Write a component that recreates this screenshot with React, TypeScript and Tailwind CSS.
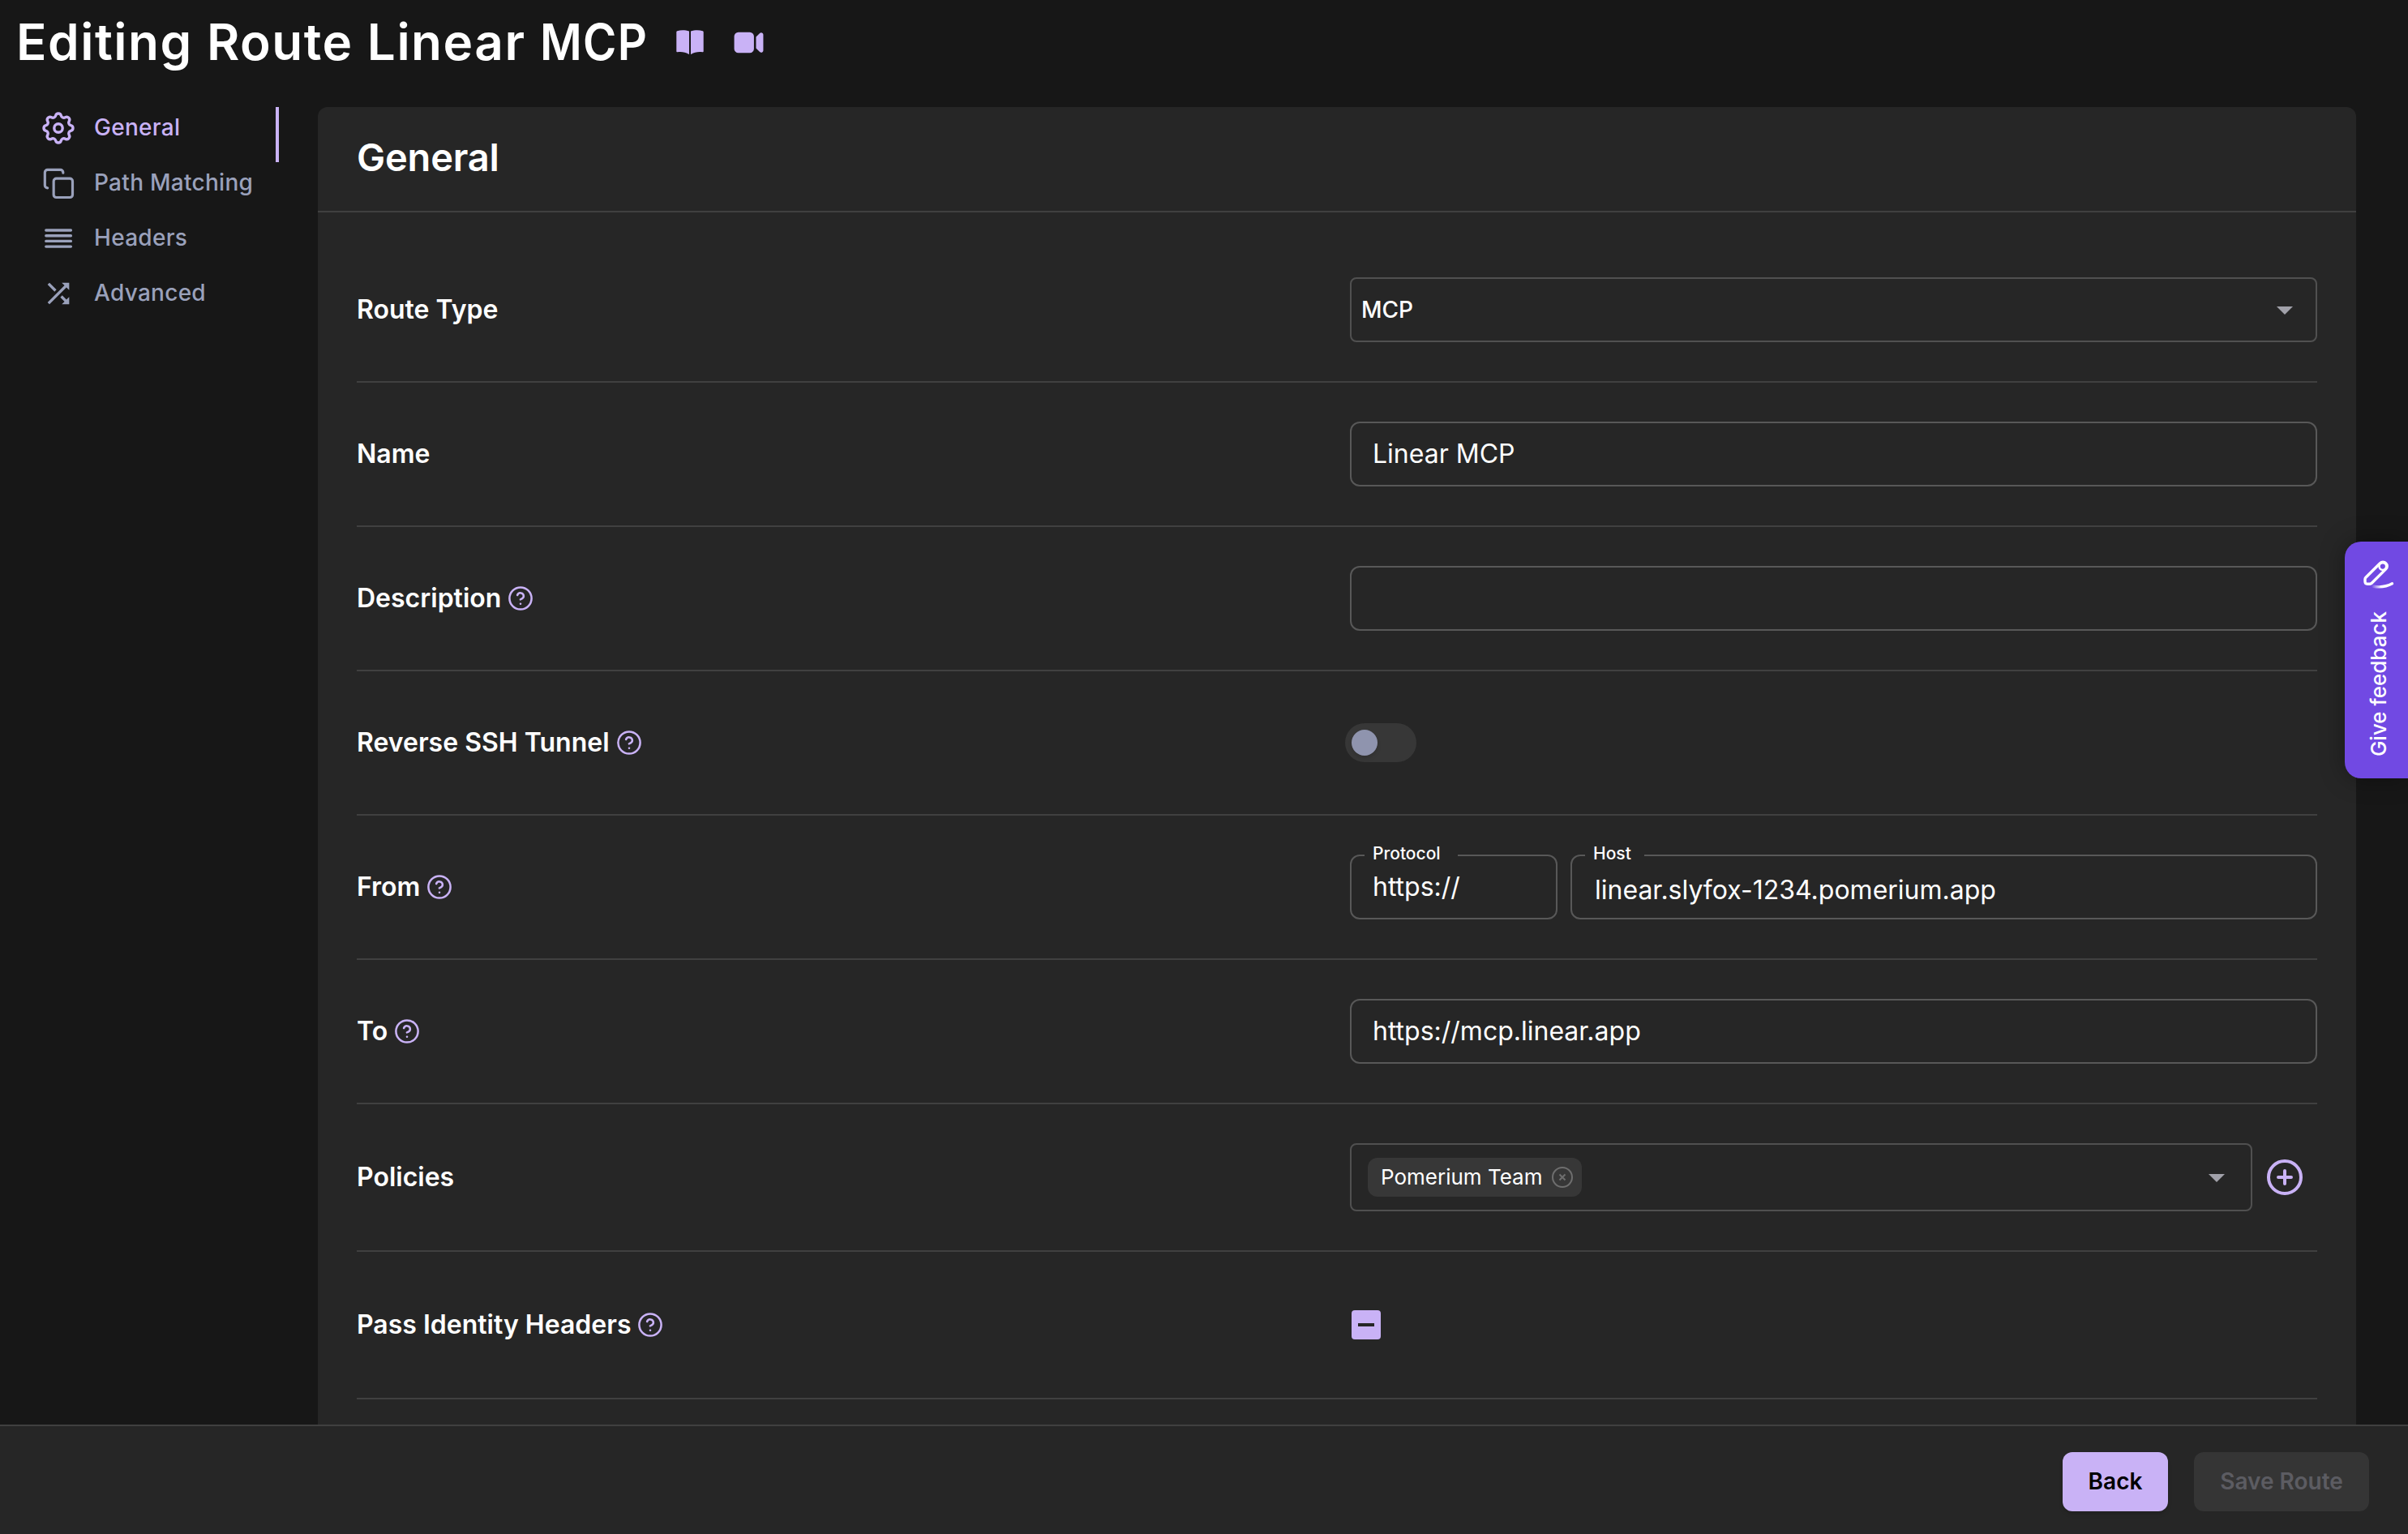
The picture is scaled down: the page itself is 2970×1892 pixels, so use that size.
import type { ReactNode } from 'react'

const NAV_ITEMS = [
  { label: 'General', icon: <GearIcon />, active: true },
  { label: 'Path Matching', icon: <CopyIcon /> },
  { label: 'Headers', icon: <LinesIcon /> },
  { label: 'Advanced', icon: <ShuffleIcon /> },
]

function GearIcon() {
  return (
    <svg width="48" height="48" viewBox="0 0 24 24" fill="none" stroke="currentColor" strokeWidth="1.7" strokeLinecap="round" strokeLinejoin="round">
      <path d="M10.325 4.317c.426-1.756 2.924-1.756 3.35 0a1.724 1.724 0 0 0 2.573 1.066c1.543-.94 3.31.826 2.37 2.37a1.724 1.724 0 0 0 1.065 2.572c1.756.426 1.756 2.924 0 3.35a1.724 1.724 0 0 0-1.066 2.573c.94 1.543-.826 3.31-2.37 2.37a1.724 1.724 0 0 0-2.572 1.065c-.426 1.756-2.924 1.756-3.35 0a1.724 1.724 0 0 0-2.573-1.066c-1.543.94-3.31-.826-2.37-2.37a1.724 1.724 0 0 0-1.065-2.572c-1.756-.426-1.756-2.924 0-3.35a1.724 1.724 0 0 0 1.066-2.573c-.94-1.543.826-3.31 2.37-2.37 1 .608 2.296.07 2.572-1.065z" />
      <circle cx="12" cy="12" r="2.6" />
    </svg>
  )
}

function CopyIcon() {
  return (
    <svg width="40" height="40" viewBox="0 0 24 24" fill="none" stroke="currentColor" strokeWidth="1.9" strokeLinecap="round" strokeLinejoin="round">
      <rect x="8.500" y="8.500" width="14" height="14" rx="2" />
      <path d="M4 15.500c-1.100 0-2-.9-2-2V4c0-1.100.9-2 2-2h9.500c1.100 0 2 .9 2 2v.3" />
    </svg>
  )
}

function LinesIcon() {
  return (
    <svg width="40" height="40" viewBox="0 0 40 40" stroke="currentColor" strokeWidth="3.400" strokeLinecap="round">
      <path d="M4.800 10h30.600M4.800 16.700h30.600M4.800 23.400h30.600M4.800 30.100h30.600" />
    </svg>
  )
}

function ShuffleIcon() {
  return (
    <svg width="40" height="40" viewBox="0 0 24 24" fill="currentColor">
      <path d="M10.59 9.17 5.41 4 4 5.41l5.17 5.17 1.42-1.41zM14.5 4l2.04 2.04L4 18.59 5.41 20 17.96 7.46 20 9.5V4h-5.5zm.33 9.41-1.41 1.41 3.13 3.13L14.5 20H20v-5.5l-2.04 2.04-3.13-3.13z" />
    </svg>
  )
}

function BookIcon() {
  return (
    <svg width="34" height="31" viewBox="0 0 34 31" fill="currentColor">
      <path d="M16 1.6C11.500-.2 5.500-.2 1.200 1.200Q.3 1.600.3 2.600V26.200Q.3 27.400 1.500 27.200C6.500 26.400 11.500 27.200 15.300 29.800Q16 30.200 16 29.500Z" />
      <path d="M18 1.6C22.500-.2 28.500-.2 32.800 1.200Q33.700 1.600 33.700 2.600V26.200Q33.700 27.400 32.500 27.200C27.500 26.400 22.500 27.200 18.700 29.800Q18 30.200 18 29.500Z" />
    </svg>
  )
}

function VideoIcon() {
  return (
    <svg width="41" height="41" viewBox="0 0 24 24" fill="currentColor">
      <path d="M4.5 4.500a3 3 0 0 0-3 3v9a3 3 0 0 0 3 3h8.250a3 3 0 0 0 3-3v-9a3 3 0 0 0-3-3H4.500ZM19.940 18.750l-2.690-2.690V7.940l2.690-2.690c.944-.945 2.560-.276 2.560 1.060v11.380c0 1.336-1.616 2.005-2.560 1.060Z" />
    </svg>
  )
}

function HelpIcon() {
  return (
    <svg className="text-[#c9b2f6]" width="32" height="32" viewBox="0 0 24 24" fill="none" stroke="currentColor" strokeWidth="1.9" strokeLinecap="round" strokeLinejoin="round">
      <circle cx="12" cy="12" r="10.200" />
      <path d="M9.090 9a3 3 0 0 1 5.830 1c0 2-3 3-3 3" />
      <path d="M12 17h.01" />
    </svg>
  )
}

function CaretIcon() {
  return (
    <svg className="text-[#a1a1aa]" width="48" height="48" viewBox="0 0 24 24" fill="currentColor">
      <path d="m7 10 5 5 5-5z" />
    </svg>
  )
}

function PenIcon() {
  return (
    <svg width="38" height="38" viewBox="0 0 38 38" fill="none" stroke="currentColor" strokeWidth="3.400" strokeLinecap="round" strokeLinejoin="round">
      <defs>
        <linearGradient id="stroke-fade" gradientUnits="userSpaceOnUse" x1="10" y1="0" x2="22" y2="0">
          <stop offset="0" stopColor="#fff" stopOpacity="0" />
          <stop offset="1" stopColor="#fff" />
        </linearGradient>
      </defs>
      <path d="M2.700 22.500 20.500 4.700a5 5 0 0 1 7.200 0 5 5 0 0 1 0 7.200L10.200 29.300Q9.300 30.200 8 30.200H5Q2 30.200 2 27V24.500Q2 23.200 2.700 22.500Z" />
      <circle cx="23.800" cy="8.600" r="4.300" strokeWidth="2.400" />
      <path d="M12 33.300C20 34.500 29 33.500 35.500 29.800" stroke="url(#stroke-fade)" />
    </svg>
  )
}

function Row({ label, help, children }: { label: string; help?: boolean; children: ReactNode }) {
  return (
    <div className="flex items-center justify-between border-b-2 border-[#404040] py-12">
      <div className="flex items-center gap-2">
        <span className="text-[32px] leading-10 font-semibold">{label}</span>
        {help && <HelpIcon />}
      </div>
      <div className="w-[1193px]">{children}</div>
    </div>
  )
}

function TextField({ value }: { value?: string }) {
  return (
    <div className="flex h-20 items-center rounded-xl border-2 border-[#585858] pl-[26px] text-[32px]">
      {value}
    </div>
  )
}

interface OutlinedFieldProps {
  label: string
  value: string
  className: string
  legendClass: string
  valueClass: string
}

function OutlinedField({ label, value, className, legendClass, valueClass }: OutlinedFieldProps) {
  return (
    <fieldset className={`-mt-[11px] h-[91px] rounded-xl border-2 border-[#585858] ${className}`}>
      <legend className={`ml-4 pl-[10px] text-[21px] leading-[24px] font-medium whitespace-nowrap ${legendClass}`}>
        <span className="relative -top-0.5">{label}</span>
      </legend>
      <div className={`text-[32px] leading-10 ${valueClass}`}>{value}</div>
    </fieldset>
  )
}

export default function App() {
  return (
    <div className="flex h-[1892px] w-[2970px] flex-col overflow-hidden bg-[#171717] font-['Inter',sans-serif] text-white">
      <header className="flex h-[104px] shrink-0 items-center pl-5">
        <h1 className="w-[814px] text-[62px] leading-none font-semibold tracking-[1.5px] whitespace-nowrap">
          Editing Route Linear <span className="inline-block origin-left scale-x-[0.905]">MCP</span>
        </h1>
        <div className="flex items-center gap-[35px] text-[#c9b2f6]">
          <BookIcon />
          <VideoIcon />
        </div>
      </header>

      <div className="mt-7 flex min-h-0 flex-1">
        <nav className="w-[344px] shrink-0">
          {NAV_ITEMS.map(item => (
            <div
              key={item.label}
              className={`flex h-[68px] items-center border-r-4 pb-4 pl-12 ${item.active ? 'border-[#c9b2f6] text-[#c9b2f6]' : 'border-transparent text-[#9aa1bb]'}`}
            >
              <span className="flex w-12 justify-center">{item.icon}</span>
              <span className="-mt-0.5 ml-5 text-[28px] font-medium tracking-[0.28px]">{item.label}</span>
            </div>
          ))}
        </nav>

        <main className="ml-12 w-[2514px] overflow-hidden rounded-t-xl bg-[#262626]">
          <h2 className="flex h-[130px] items-center border-b-2 border-[#404040] pb-[3px] pl-12 text-[47px] font-semibold tracking-[-0.2px]">
            General
          </h2>
          <div className="px-12 pt-8">
            <Row label="Route Type">
              <div className="flex h-20 items-center justify-between rounded-lg border-2 border-[#505050] pr-[14px] pl-3 text-[28px] font-medium">
                MCP
                <CaretIcon />
              </div>
            </Row>
            <Row label="Name">
              <TextField value="Linear MCP" />
            </Row>
            <Row label="Description" help>
              <TextField />
            </Row>
            <Row label="Reverse SSH Tunnel" help>
              <div className="flex h-20 items-center">
                <div className="-ml-1.5 flex h-12 w-[88px] items-center rounded-full bg-[#373737] pl-2">
                  <div className="size-8 rounded-full bg-[#8f94ae] shadow-md" />
                </div>
              </div>
            </Row>
            <Row label="From" help>
              <div className="flex gap-4">
                <OutlinedField
                  label="Protocol"
                  value="https://"
                  className="w-64"
                  legendClass="w-[115px]"
                  valueClass="pt-[7px] pl-[26px]"
                />
                <OutlinedField
                  label="Host"
                  value="linear.slyfox-1234.pomerium.app"
                  className="flex-1"
                  legendClass="w-[73px]"
                  valueClass="pt-[11px] pl-7"
                />
              </div>
            </Row>
            <Row label="To" help>
              <TextField value="https://mcp.linear.app" />
            </Row>
            <Row label="Policies">
              <div className="flex items-center">
                <div className="flex h-[84px] w-[1113px] items-center justify-between rounded-lg border-2 border-[#505050] pr-[18px] pl-5">
                  <div className="flex h-12 w-[264px] items-center justify-between rounded-xl bg-[#373737] pr-[10px] pl-4">
                    <span className="-mt-px text-[26px]">Pomerium Team</span>
                    <svg width="28" height="28" viewBox="0 0 28 28" fill="none" stroke="#6e6e6e" strokeWidth="2">
                      <circle cx="14" cy="14" r="12" />
                      <path d="m10.500 10.500 7 7M17.500 10.500l-7 7" />
                    </svg>
                  </div>
                  <CaretIcon />
                </div>
                <svg className="ml-4 text-[#c9b2f6]" width="48" height="48" viewBox="0 0 24 24" fill="none" stroke="currentColor" strokeWidth="2" strokeLinecap="round">
                  <circle cx="12" cy="12" r="10" />
                  <path d="M8 12h8M12 8v8" />
                </svg>
              </div>
            </Row>
            <Row label="Pass Identity Headers" help>
              <div className="flex h-[84px] items-center pl-0.5">
                <div className="flex size-9 items-center justify-center rounded bg-[#c9b2f6]">
                  <div className="h-1 w-5 bg-[#262626]" />
                </div>
              </div>
            </Row>
          </div>
        </main>
      </div>

      <footer className="flex h-[135px] shrink-0 items-start justify-end gap-8 border-t-2 border-[#404040] bg-[#262626] pt-8 pr-12 text-[28px] font-semibold">
        <button className="h-[73px] w-[130px] rounded-xl bg-[#c9b2f6] pb-0.5 text-black shadow-md">Back</button>
        <button className="h-[73px] w-[216px] rounded-xl bg-[#353535] pb-0.5 text-[#5c5c62]">Save Route</button>
      </footer>

      <button className="absolute top-[668px] left-[2892px] flex h-[292px] w-[78px] flex-col items-center rounded-l-[20px] bg-[#7149e3] pt-[22px] pl-1.5 shadow-[0_0_30px_rgba(0,0,0,0.35)]">
        <PenIcon />
        <span className="mt-[26px] rotate-180 text-[26px] leading-none font-medium whitespace-nowrap [writing-mode:vertical-rl]">
          Give feedback
        </span>
      </button>
    </div>
  )
}
